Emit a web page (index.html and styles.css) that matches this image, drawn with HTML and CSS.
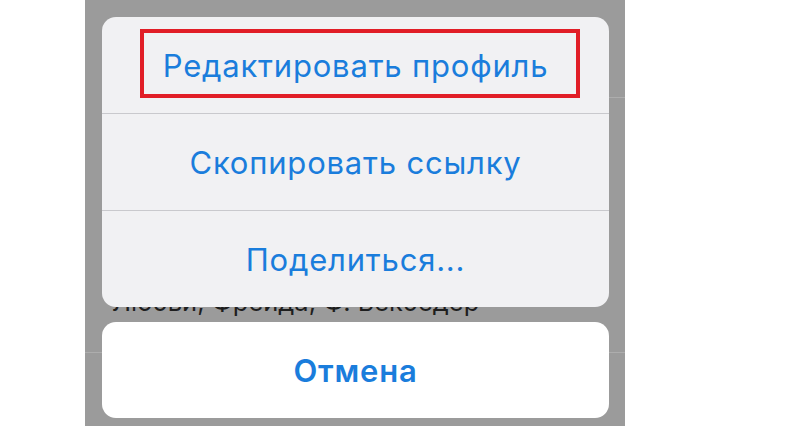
FILE: index.html
```html
<!DOCTYPE html>
<html lang="ru">
<head>
<meta charset="utf-8">
<title>Действия с профилем</title>
<link rel="stylesheet" href="styles.css">
</head>
<body>
<div class="page">
  <div class="phone">
    <div class="bg-list">
      <div class="bg-row bg-row-first"></div>
      <div class="bg-sep bg-sep-inset"></div>
      <div class="bg-row bg-row-books">
        <span class="bg-text">Любви, Фрейда, Ф. Бекбедер</span>
      </div>
      <div class="bg-sep"></div>
    </div>

    <div class="sheet">
      <div class="sheet-group">
        <div class="sheet-item">Редактировать профиль</div>
        <div class="sheet-item">Скопировать ссылку</div>
        <div class="sheet-item">Поделиться...</div>
      </div>
      <div class="sheet-cancel">Отмена</div>
    </div>

    <div class="highlight"></div>
  </div>
</div>
</body>
</html>
```

FILE: styles.css
```css
html, body {
  margin: 0;
  padding: 0;
  background: #ffffff;
}

.page {
  width: 800px;
  height: 426px;
  display: flex;
  overflow: hidden;
}

.phone {
  position: relative;
  margin-left: 85px;
  width: 540px;
  height: 426px;
  background: #9b9b9b;
  overflow: hidden;
  font-family: "Inter", "Liberation Sans", Arial, sans-serif;
}

.bg-list {
  display: flex;
  flex-direction: column;
}

.bg-row-first {
  height: 97px;
}

.bg-row-books {
  height: 254px;
  display: flex;
  align-items: flex-end;
  box-sizing: border-box;
  padding-left: 27px;
  padding-bottom: 35px;
}

.bg-text {
  font-size: 25.5px;
  line-height: 31px;
  color: #1e1e1e;
  white-space: nowrap;
}

.bg-sep {
  height: 1px;
  background: #adadad;
}

.bg-sep-inset {
  margin-left: 30px;
}

.sheet {
  position: absolute;
  top: 17px;
  left: 17px;
  right: 16px;
  display: flex;
  flex-direction: column;
  gap: 15px;
}

.sheet-group {
  background: #f1f1f3;
  border-radius: 14px;
  overflow: hidden;
  display: flex;
  flex-direction: column;
}

.sheet-item {
  height: 96px;
  display: flex;
  align-items: center;
  justify-content: center;
  font-size: 31px;
  color: #1a7ddc;
  letter-spacing: 0.8px;
}

.sheet-item + .sheet-item {
  border-top: 1px solid #c9c9cd;
}

.sheet-cancel {
  height: 96px;
  background: #ffffff;
  border-radius: 14px;
  display: flex;
  align-items: center;
  justify-content: center;
  font-size: 31px;
  font-weight: 600;
  color: #1a7ddc;
  letter-spacing: 0.8px;
}

.highlight {
  position: absolute;
  left: 55px;
  top: 29px;
  width: 440px;
  height: 69px;
  box-sizing: border-box;
  border: 4px solid #e11d26;
}
```
